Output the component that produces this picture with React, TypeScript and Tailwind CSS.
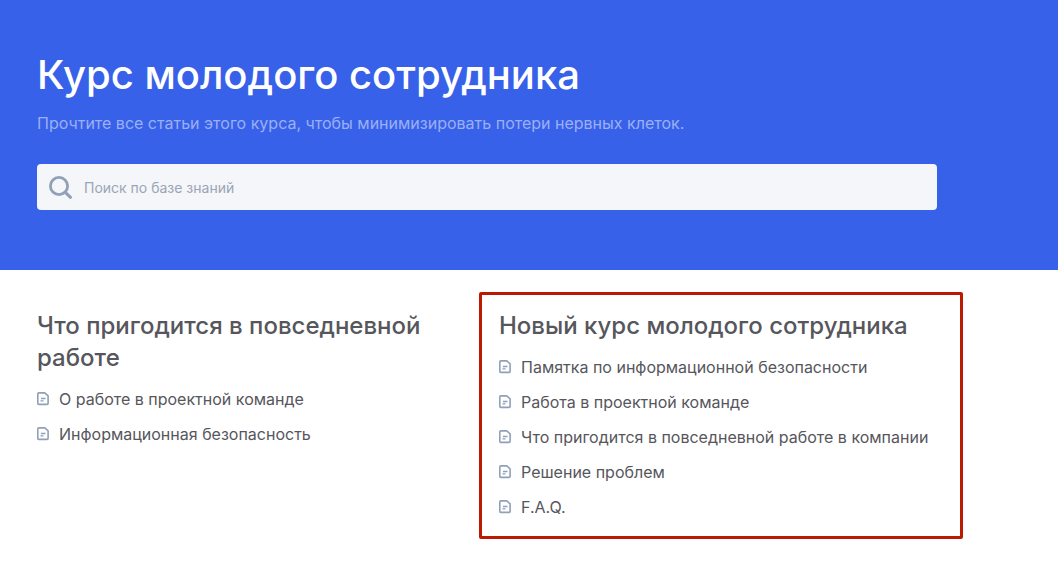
type Section = {
  title: string;
  articles: string[];
  highlighted?: boolean;
};

const sections: Section[] = [
  {
    title: 'Что пригодится в повседневной работе',
    articles: ['О работе в проектной команде', 'Информационная безопасность'],
  },
  {
    title: 'Новый курс молодого сотрудника',
    articles: [
      'Памятка по информационной безопасности',
      'Работа в проектной команде',
      'Что пригодится в повседневной работе в компании',
      'Решение проблем',
      'F.A.Q.',
    ],
    highlighted: true,
  },
];

function SearchIcon() {
  return (
    <svg className="h-6 w-6 shrink-0" viewBox="0 0 24 24" fill="none" stroke="#90a0b7" strokeWidth="2.8" aria-hidden="true">
      <circle cx="10" cy="11" r="8.6" />
      <path d="M16.3 17.3 L21.5 22.3" strokeWidth="3" strokeLinecap="round" />
    </svg>
  );
}

function ArticleIcon() {
  return (
    <svg className="h-[14px] w-3 shrink-0" viewBox="0 0 12 14" fill="none" stroke="#90a0b7" strokeWidth="1.6" aria-hidden="true">
      <path d="M1.8 0.9 H7.8 L11.1 3.8 V11.4 Q11.1 12.4 10.1 12.4 H1.8 Q0.8 12.4 0.8 11.4 V1.9 Q0.8 0.9 1.8 0.9 Z" strokeLinejoin="round" />
      <path d="M4 6.5 H8.5 M3.5 8.8 H6.5" strokeWidth="1.3" />
    </svg>
  );
}

function SectionList({ title, articles, highlighted }: Section) {
  return (
    <section className="relative">
      <h2 className="mb-[13px] text-2xl font-medium text-[#56565c]">{title}</h2>
      <ul className="flex flex-col gap-[11px]">
        {articles.map((article) => (
          <li key={article}>
            <a href="#" className="flex items-center gap-[10px] text-base text-[#56565c]">
              <ArticleIcon />
              {article}
            </a>
          </li>
        ))}
      </ul>
      {highlighted && (
        <div className="pointer-events-none absolute -top-[18px] -right-[26px] -bottom-5 -left-5 rounded-xs border-3 border-[#bb1a00]" />
      )}
    </section>
  );
}

export default function App() {
  return (
    <div className="min-h-screen bg-white font-['Inter',sans-serif]">
      <header className="bg-[#3861e9] px-[37px] pt-[51px] pb-[60px]">
        <div className="max-w-[900px]">
          <h1 className="text-[40px] leading-12 font-medium text-white">Курс молодого сотрудника</h1>
          <p className="mt-3 text-base text-[#9bb0f4]">
            Прочтите все статьи этого курса, чтобы минимизировать потери нервных клеток.
          </p>
          <label className="mt-[29px] flex items-center gap-[11px] rounded bg-[#f5f6fa] px-3 py-[11px]">
            <SearchIcon />
            <input
              type="search"
              aria-label="Поиск по базе знаний"
              placeholder="Поиск по базе знаний"
              className="h-6 w-full bg-transparent text-sm text-[#56565c] outline-none placeholder:text-[#9aa5b5]"
            />
          </label>
        </div>
      </header>

      <main className="px-[37px] py-10">
        <div className="grid max-w-[900px] grid-cols-2 gap-6">
          {sections.map((section) => (
            <SectionList key={section.title} {...section} />
          ))}
        </div>
      </main>
    </div>
  );
}
